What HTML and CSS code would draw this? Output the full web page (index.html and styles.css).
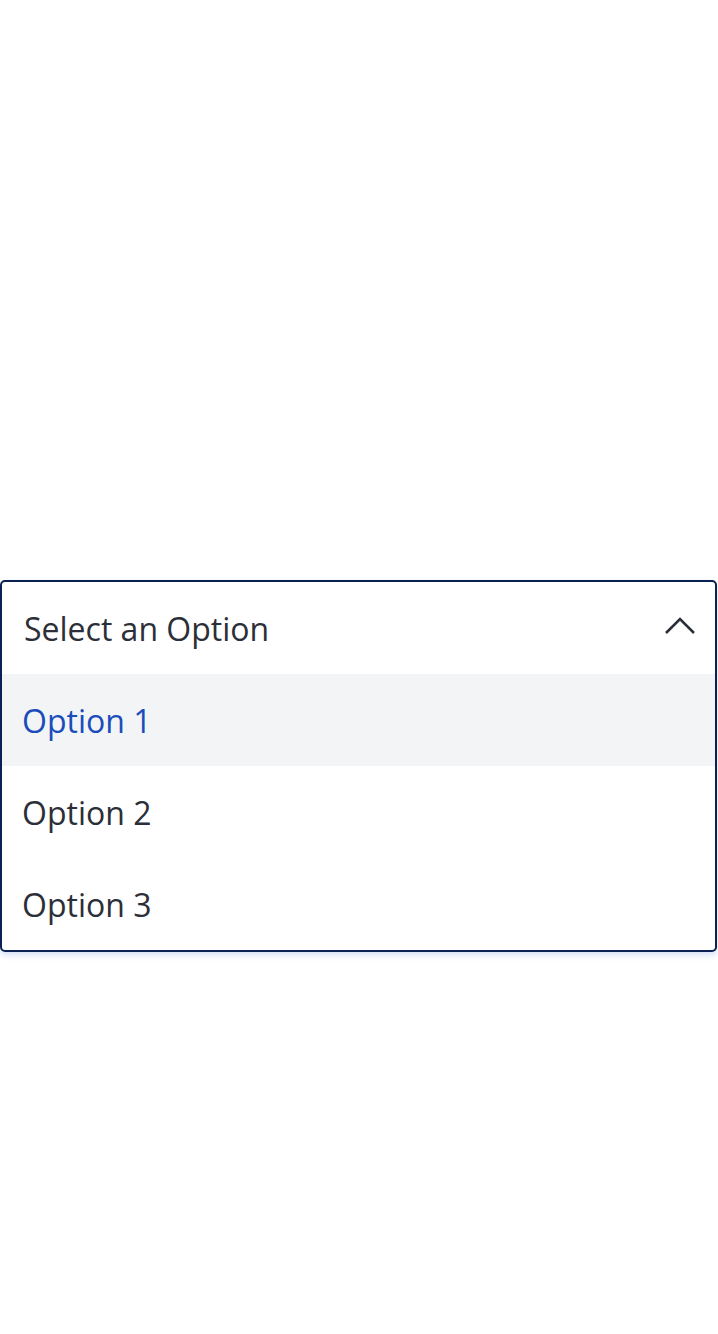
FILE: index.html
```html
<!DOCTYPE html>
<html>
<head>
<meta charset="utf-8">
<link rel="stylesheet" href="styles.css">
</head>
<body>
<div class="page">
  <div class="select">
    <div class="select-head">
      <span class="select-label">Select an Option</span>
      <svg class="chevron" width="34" height="20" viewBox="0 0 34 20"><path d="M3 17 L17 3 L31 17" fill="none" stroke="#2b2f37" stroke-width="2.6"/></svg>
    </div>
    <ul class="options">
      <li class="option option-active">Option 1</li>
      <li class="option">Option 2</li>
      <li class="option">Option 3</li>
    </ul>
  </div>
</div>
</body>
</html>
```
FILE: styles.css
```css
html, body {
  margin: 0;
  padding: 0;
  background: #ffffff;
}
.page {
  width: 718px;
  height: 1334px;
  padding-top: 580px;
  box-sizing: border-box;
  font-family: "Open Sans", "Noto Sans", sans-serif;
}
.select {
  width: 717px;
  box-sizing: border-box;
  border: 2px solid #0b2152;
  border-radius: 5px;
  background: #fff;
  box-shadow: 0 3px 6px rgba(60, 110, 220, 0.22);
  overflow: hidden;
}
.select-head {
  height: 92px;
  display: flex;
  align-items: center;
  justify-content: space-between;
  padding: 0 18px 0 22px;
}
.select-label {
  font-size: 32px;
  color: #2c2f38;
}
.chevron {
  display: block;
  margin-top: -4px;
}
.options {
  list-style: none;
  margin: 0;
  padding: 0;
}
.option {
  height: 92px;
  display: flex;
  align-items: center;
  padding: 0 20px;
  font-size: 32px;
  color: #2c2f38;
}
.option-active {
  background: #f3f4f6;
  color: #1a4dba;
}
```
